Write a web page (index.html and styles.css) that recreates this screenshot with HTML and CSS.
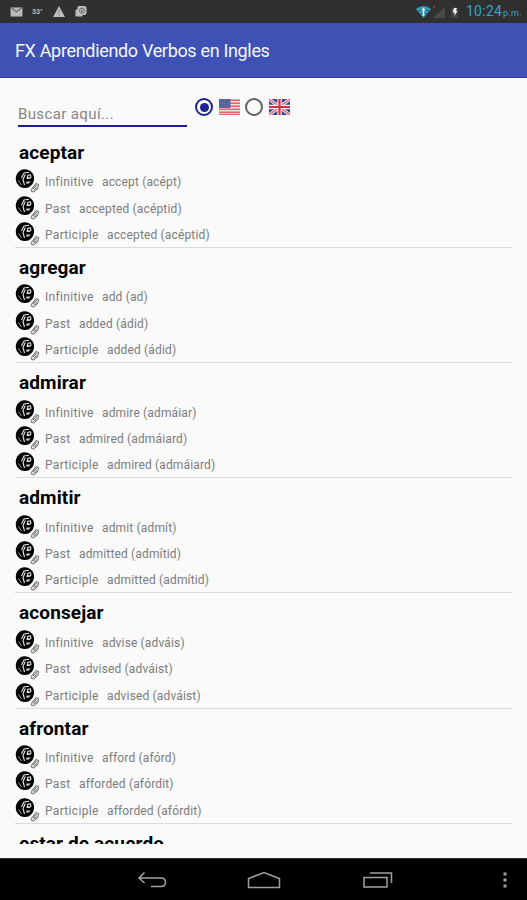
FILE: index.html
```
<!DOCTYPE html>
<html lang="es">
<head>
<meta charset="utf-8">
<title>FX Aprendiendo Verbos en Ingles</title>
<link rel="stylesheet" href="styles.css">
</head>
<body>
<svg class="defs" aria-hidden="true">
  <symbol id="speak" viewBox="0 0 25 25">
    <path d="M9.500.3c3 0 5 1 6.500 2.500 2.500 2 3.300 4.500 3 7.500-.2 3-1.500 5-3 6.200-1.500 1.800-4 2.700-6.500 2.500C4.500 18.700.8 14.500.8 9.700S4.500.3 9.500.3z" fill="#000"/>
    <path d="M14 3.300l-5 .7-2.500 5M10.300 5.500L8 10.500l1.500 5.500" fill="none" stroke="#e8e8e8" stroke-width="1.100"/>
    <path d="M3.500 11.500l3 4.500" fill="none" stroke="#999" stroke-width="1"/>
    <path d="M12.300 5.700l3.700-.4.500 3.200-2 1.500h-3z" fill="#dedede"/>
    <circle cx="14.200" cy="7.500" r="1.100" fill="#000"/>
    <path d="M11 12.700l4.500-.5-1.500 2.300-2.500.3z" fill="#ccc"/>
    <path d="M14.500 20.500l6-7.500 4 1.500-1 4.500-5 5-3.500-1z" fill="#fafafa"/>
    <path d="M16.300 20.500l4.500-6 3 1-1 4-4 3.500-2.500-.7z" fill="#dadada" stroke="#666" stroke-width=".9"/>
    <path d="M18 20l3.500-4M19.500 21l2.500-2.500" fill="none" stroke="#555" stroke-width=".9"/>
  </symbol>
</svg>
<div class="screen">
  <header class="status">
    <div class="notices">
      <svg class="mail" viewBox="0 0 14 11"><path d="M.5.500h13v10H.5z" fill="#bbb"/><path d="M1.500 1l5.500 4.300L12.500 1" fill="none" stroke="#555" stroke-width="1.200"/></svg>
      <span class="degrees">33°</span>
      <svg class="warn" viewBox="0 0 12 11"><path d="M6 0l6 11H0z" fill="#bbb"/><path d="M6 4v3M6 8.300v1.200" stroke="#888" stroke-width="1.200"/></svg>
      <svg class="sync" viewBox="0 0 12 11"><path d="M3.500 0H10l1.500 1.500v6L10 9H8L7 10.500H.5V4L2.500 3V1z" fill="#bbb"/><circle cx="7" cy="4.700" r="2.500" fill="none" stroke="#666"/><path d="M6.300 3.500v2.500l2-1.200z" fill="#555"/></svg>
    </div>
    <div class="system">
      <svg class="signals" viewBox="0 0 46 16">
        <path d="M0 5Q7.500-.8 15 5L7.500 14z" fill="#2e9fc0"/>
        <path d="M2 7.300q5.500-4 11 0M4.200 9.700q3.300-2 6.600 0" fill="none" stroke="#2b4b57" stroke-width=".8"/>
        <path d="M7.500 3.500l2 2.500H8.300v6H6.700V6H5.500z" fill="#eee"/>
        <path d="M17 2.200h2v2h-2z" fill="#c0202c"/>
        <path d="M29 3v11H17z" fill="#4b4b4b"/>
        <path d="M35 4h2V3h3v1h2v10h-7z" fill="#404040"/>
        <path d="M38 4h3l-1 3h1.500L38.500 12V8.500h-2z" fill="#eee"/>
      </svg>
      <span class="clock">10:24</span><span class="meridiem">p.m.</span>
    </div>
  </header>
  <div class="appbar"><h1>FX Aprendiendo Verbos en Ingles</h1></div>
  <main>
    <div class="tools">
      <div class="search"><span>Buscar aquí...</span></div>
      <span class="radio on"></span>
      <svg class="flag" viewBox="0 0 21 16"><path d="M0 0h21v16H0z" fill="#eedfe2"/><path d="M0 1.200h21M0 4.200h21M0 7.300h21M0 10.300h21M0 13.300h21M0 15.500h21" stroke="#df6870" stroke-width="1.400"/><path d="M0 0h11.500v9H0z" fill="#5562a0"/><path d="M1 2h10M1 4.500h10M1 7h10" stroke="#7481b2" stroke-width=".7" stroke-dasharray="1 1"/></svg>
      <span class="radio"></span>
      <svg class="flag uk" viewBox="0 0 21 16"><path d="M0 0h21v16H0z" fill="#39478f"/><path d="M0 0l21 16M21 0L0 16" stroke="#efe9ef" stroke-width="3.200"/><path d="M0 0l21 16M21 0L0 16" stroke="#d8535f" stroke-width="1.100"/><path d="M10.500 0v16M0 8h21" stroke="#f5eef1" stroke-width="4.500"/><path d="M10.500 0v16M0 8h21" stroke="#d8303f" stroke-width="2.200"/></svg>
    </div>
    <div class="list">
      <section class="verb"><h2>aceptar</h2>
        <p><svg><use href="#speak"/></svg><span class="tense inf">Infinitive</span><span>accept (acépt)</span></p>
        <p><svg><use href="#speak"/></svg><span class="tense past">Past</span><span>accepted (acéptid)</span></p>
        <p><svg><use href="#speak"/></svg><span class="tense part">Participle</span><span>accepted (acéptid)</span></p>
      </section>
      <section class="verb"><h2>agregar</h2>
        <p><svg><use href="#speak"/></svg><span class="tense inf">Infinitive</span><span>add (ad)</span></p>
        <p><svg><use href="#speak"/></svg><span class="tense past">Past</span><span>added (ádid)</span></p>
        <p><svg><use href="#speak"/></svg><span class="tense part">Participle</span><span>added (ádid)</span></p>
      </section>
      <section class="verb"><h2>admirar</h2>
        <p><svg><use href="#speak"/></svg><span class="tense inf">Infinitive</span><span>admire (admáiar)</span></p>
        <p><svg><use href="#speak"/></svg><span class="tense past">Past</span><span>admired (admáiard)</span></p>
        <p><svg><use href="#speak"/></svg><span class="tense part">Participle</span><span>admired (admáiard)</span></p>
      </section>
      <section class="verb"><h2>admitir</h2>
        <p><svg><use href="#speak"/></svg><span class="tense inf">Infinitive</span><span>admit (admít)</span></p>
        <p><svg><use href="#speak"/></svg><span class="tense past">Past</span><span>admitted (admítid)</span></p>
        <p><svg><use href="#speak"/></svg><span class="tense part">Participle</span><span>admitted (admítid)</span></p>
      </section>
      <section class="verb"><h2>aconsejar</h2>
        <p><svg><use href="#speak"/></svg><span class="tense inf">Infinitive</span><span>advise (adváis)</span></p>
        <p><svg><use href="#speak"/></svg><span class="tense past">Past</span><span>advised (adváist)</span></p>
        <p><svg><use href="#speak"/></svg><span class="tense part">Participle</span><span>advised (adváist)</span></p>
      </section>
      <section class="verb"><h2>afrontar</h2>
        <p><svg><use href="#speak"/></svg><span class="tense inf">Infinitive</span><span>afford (afórd)</span></p>
        <p><svg><use href="#speak"/></svg><span class="tense past">Past</span><span>afforded (afórdit)</span></p>
        <p><svg><use href="#speak"/></svg><span class="tense part">Participle</span><span>afforded (afórdit)</span></p>
      </section>
      <section class="verb"><h2>estar de acuerdo</h2></section>
    </div>
  </main>
  <nav>
    <svg class="back" viewBox="0 0 30 18"><path d="M7.500 1.500L2 7l5.500 5M2 7h22q4.500 0 4.500 4.200T24 15.500H14"/></svg>
    <svg class="home" viewBox="0 0 34 18"><path d="M1.500 16.500V7.500L17 1.500l15.500 6v9z"/></svg>
    <svg class="recent" viewBox="0 0 32 18"><path d="M2 6.500h23v9.500H2zM8 2h21.500v10"/></svg>
    <svg class="more" viewBox="0 0 4 18"><path d="M.5 1.500h3v3h-3zM.5 7.500h3v3h-3zM.5 13.500h3v3h-3z"/></svg>
  </nav>
</div>
</body>
</html>
```
FILE: styles.css
```
* { box-sizing: border-box; }
body { margin: 0; font-family: Roboto, "Liberation Sans", sans-serif; background: #fafafa; }
h1, h2, p { margin: 0; }
svg { display: block; flex: none; }
.defs { width: 0; height: 0; position: absolute; }
.screen { width: 527px; height: 900px; display: flex; flex-direction: column; overflow: hidden; }

.status { height: 23px; flex: none; background: #303030; display: flex; justify-content: space-between; padding: 0 4px 0 10px; }
.notices { display: flex; align-items: center; }
.mail { width: 13px; height: 10px; }
.degrees { width: 12px; margin-left: 9px; font-size: 7px; line-height: 10px; font-weight: 700; color: #bbb; }
.warn { width: 12px; height: 11px; margin-left: 9px; }
.sync { width: 12px; height: 11px; margin-left: 10px; }
.system { display: flex; align-items: baseline; color: #33a5cc; line-height: 23px; }
.signals { width: 46px; height: 16px; align-self: center; margin-right: 4px; }
.clock { font-size: 14px; width: 37px; letter-spacing: .25px; }
.meridiem { font-size: 9px; width: 20px; letter-spacing: .3px; }

.appbar { height: 55px; flex: none; background: #3f51b5; border-bottom: 1px solid #303f9f; padding: 1px 0 0 15px; display: flex; align-items: center; }
h1 { font-size: 18px; font-weight: 400; letter-spacing: -.33px; color: #f5f6ff; white-space: nowrap; }

main { flex: 1; min-height: 0; display: flex; flex-direction: column; padding: 0 15px 14px; }
.tools { height: 54.6px; flex: none; display: flex; align-items: flex-start; padding: 20px 0 0 3px; }
.search { width: 169px; height: 29px; border-bottom: 2px solid #1d1d98; font-size: 15px; line-height: 32px; letter-spacing: .38px; color: #858585; margin-right: 8px; }
.radio { width: 18px; height: 18px; border: 2px solid #606060; border-radius: 50%; flex: none; }
.radio.on { border-color: #1f2391; display: flex; align-items: center; justify-content: center; }
.radio.on::after { content: ""; width: 9px; height: 9px; border-radius: 50%; background: #1f2391; }
.flag { width: 21px; height: 16px; margin: 1px 5px 0 6px; }

.list { flex: 1; min-height: 0; overflow: hidden; }
.verb { height: 115.2px; border-bottom: 1px solid #dadada; }
h2 { height: 36px; padding-left: 4px; font-size: 19px; line-height: 39px; font-weight: 700; letter-spacing: .12px; color: #000; white-space: nowrap; }
.verb p { height: 26.3px; display: flex; align-items: center; font-size: 12px; line-height: 26px; letter-spacing: .15px; color: #7c7c7c; white-space: nowrap; }
.verb svg { width: 25px; height: 25px; margin-right: 5px; }
.verb span { padding-top: 1px; }
.tense { letter-spacing: .32px; }
.inf { width: 57px; }
.past { width: 34px; }
.part { width: 62px; }

nav { height: 42px; flex: none; background: #000; border-top: 1px solid #333; display: flex; align-items: center; padding: 1px 20px 0 137px; }
nav svg { height: 18px; fill: none; stroke: #a0a0a0; stroke-width: 1.500; }
.back { width: 30px; }
.home { width: 34px; margin-left: 80px; }
.recent { width: 32px; margin-left: 81px; }
.more { width: 4px; margin-left: auto; }
nav .more { fill: #a0a0a0; stroke: none; }
```
